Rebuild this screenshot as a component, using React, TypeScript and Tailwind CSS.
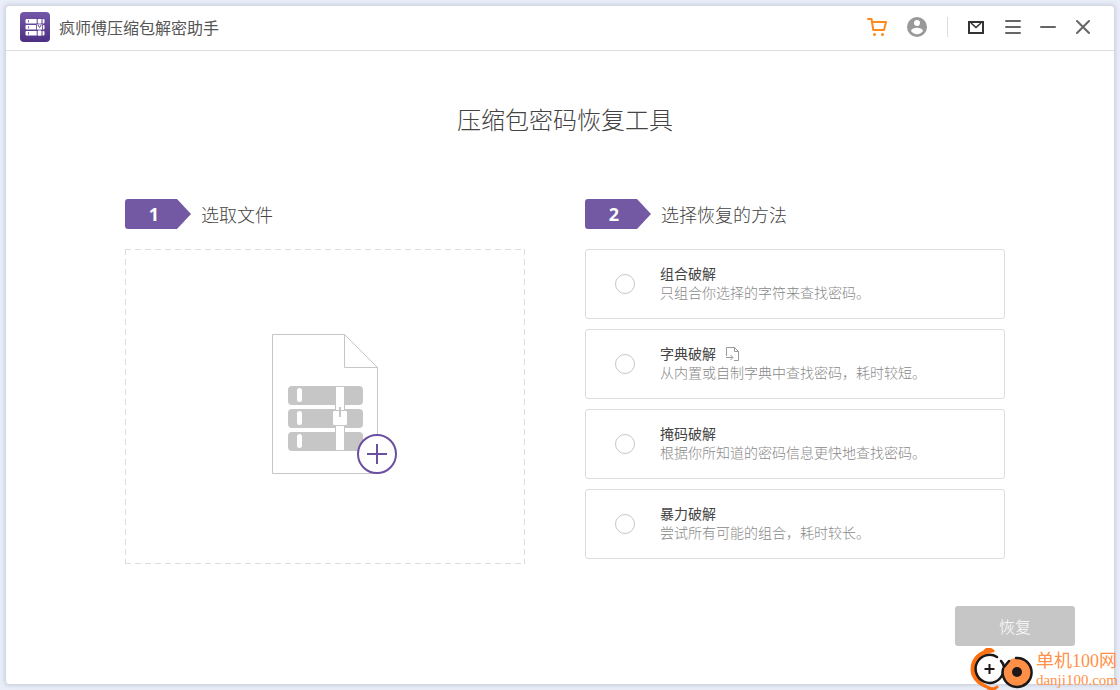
import { useState } from "react";

const methods = [
    { id: "combination", title: "组合破解", desc: "只组合你选择的字符来查找密码。" },
    { id: "dictionary", title: "字典破解", desc: "从内置或自制字典中查找密码，耗时较短。", importable: true },
    { id: "mask", title: "掩码破解", desc: "根据你所知道的密码信息更快地查找密码。" },
    { id: "brute", title: "暴力破解", desc: "尝试所有可能的组合，耗时较长。" },
];

// App logo: three binders held by a strap
const AppLogo = () => (
    <svg className="size-[30px]" viewBox="0 0 30 30" aria-hidden="true">
        <defs>
            <linearGradient id="logo-bg" x1="0" y1="0" x2="0" y2="1">
                <stop offset="0" stopColor="#7458a8" />
                <stop offset="1" stopColor="#4c2f82" />
            </linearGradient>
        </defs>
        <rect width="30" height="30" rx="4" fill="url(#logo-bg)" />
        {[7, 13, 19].map((y) => (
            <g key={y}>
                <rect x="5.500" y={y} width="19" height="4.500" rx="1" fill="#fff" />
                <rect x="8" y={y + 1} width="1" height="2.500" fill="#8a72b8" />
            </g>
        ))}
        <path d="M17.200 6v18M22 6v18" stroke="#5d4094" strokeWidth="1" />
        <path d="M19.600 7v16.500" stroke="#fff" strokeWidth="2.800" />
        <rect x="16.500" y="12" width="6" height="6" rx="1" fill="#fff" stroke="#5d4094" strokeWidth="0.800" />
        <path d="M18 13l1.600 2.500L21.200 13" stroke="#5d4094" fill="none" />
    </svg>
);

const CartIcon = () => (
    <svg className="size-5" viewBox="0 0 20 20" fill="none" stroke="#ff8a1a" strokeWidth="2" strokeLinecap="round" strokeLinejoin="round" aria-hidden="true">
        <path d="M1 2h3.500L6.300 13H17L19 5H5" />
        <circle cx="7.500" cy="17.500" r="1.500" fill="#ff8a1a" stroke="none" />
        <circle cx="15.500" cy="17.500" r="1.500" fill="#ff8a1a" stroke="none" />
    </svg>
);

const UserIcon = () => (
    <svg className="size-5" viewBox="0 0 20 20" aria-hidden="true">
        <circle cx="10" cy="10" r="10" fill="#999" />
        <circle cx="10" cy="6" r="3" fill="#fff" />
        <path d="M4 14c0-2 4-3.200 6-3.200s6 1.200 6 3.200c-1.300 2-3.500 3.200-6 3.200S5.300 16 4 14z" fill="#fff" />
    </svg>
);

const FileDrawing = () => (
    <svg className="h-[140px] w-[106px] overflow-visible" viewBox="0 0 106 140" fill="none" aria-hidden="true">
        <path d="M.5 .5H72.500L105.500 33.500V139.500H.5z M72.500 .5V33.500H105.500" stroke="#c6c6c6" />
        {[52, 75, 98].map((y) => (
            <g key={y}>
                <rect x="16" y={y} width="75" height="19" rx="4" fill="#c6c6c6" />
                <rect x="25" y={y + 2} width="5" height="14" rx="2.500" fill="#fff" />
            </g>
        ))}
        <rect x="63.500" y="52.500" width="9" height="64" fill="#fff" stroke="#c6c6c6" />
        <rect x="60.500" y="76.500" width="15" height="15" rx="1.500" fill="#fff" stroke="#c6c6c6" />
        <path d="M68 73v10" stroke="#c6c6c6" strokeWidth="2" />
        <circle cx="105" cy="120" r="19" fill="#fff" stroke="#6b4fa0" strokeWidth="2" />
        <path d="M95 120h20M105 110v20" stroke="#6b4fa0" strokeWidth="2" />
    </svg>
);

const ImportIcon = () => (
    <svg className="h-[14px] w-[13px]" viewBox="0 0 13 14" fill="none" stroke="#999" aria-hidden="true">
        <path d="M.5 9V.5H8.500L12.500 4.500V13.500H8M8.500 .5V4.500H12.500M0 10.500H6.500M4.500 8l2.500 2.500L4.500 13" />
    </svg>
);

const StepHeading = ({ step, children }: { step: number; children: string }) => (
    <div className="mb-5 flex items-center gap-[10px]">
        <span className="flex h-[30px] w-[66px] items-center justify-center rounded-l-[3px] bg-[#7359a3] pr-2 font-['Open_Sans',sans-serif] text-lg font-bold text-white [clip-path:polygon(0_0,52px_0,100%_50%,52px_100%,0_100%)]">
            {step}
        </span>
        <h2 className="text-lg leading-[30px] font-light text-[#444]">{children}</h2>
    </div>
);

const TitleBar = () => (
    <header className="flex h-[45px] items-center border-b border-[#ddd] pr-[22px] pb-[2px] pl-[14px]">
        <AppLogo />
        <span className="ml-[9px] text-base text-[#555]">疯师傅压缩包解密助手</span>
        <div className="ml-auto flex items-center gap-5">
            <button type="button" aria-label="购物车"><CartIcon /></button>
            <button type="button" aria-label="账户"><UserIcon /></button>
            <span className="h-5 w-px bg-[#ddd]" />
            <button type="button" aria-label="邮件">
                <svg className="size-4" viewBox="0 0 16 16" fill="none" stroke="#333" strokeWidth="2" aria-hidden="true">
                    <path d="M1 3h14v11H1z" />
                    <path d="M3 4l5 4.500L13 4" strokeWidth="1.600" />
                </svg>
            </button>
            <button type="button" aria-label="菜单">
                <svg className="size-4 overflow-visible" viewBox="0 0 16 16" stroke="#666" strokeWidth="2" strokeLinecap="round" aria-hidden="true">
                    <path d="M2 2h14M2 8h14M2 14h14" />
                </svg>
            </button>
            <button type="button" aria-label="最小化">
                <svg className="size-4" viewBox="0 0 16 16" stroke="#666" strokeWidth="2" strokeLinecap="round" aria-hidden="true">
                    <path d="M1 8h14" />
                </svg>
            </button>
            <button type="button" aria-label="关闭">
                <svg className="size-4" viewBox="0 0 16 16" stroke="#666" strokeWidth="2" strokeLinecap="round" aria-hidden="true">
                    <path d="M1 2l12 12M13 2L1 14" />
                </svg>
            </button>
        </div>
    </header>
);

const Watermark = () => (
    <div className="absolute right-0 bottom-0 flex items-end gap-[2px] pr-[2px] font-['Liberation_Serif','Noto_Sans_CJK_SC',serif] text-[#ff9148]">
        <svg className="h-[42px] w-[64px]" viewBox="0 0 64 42" fill="none" aria-hidden="true">
            <path d="M22 2C10 1 1 10 1 21s10 20 24 20c-11-3-20-10-20-20S12 6 22 4z" fill="#ff6f0f" stroke="#ff6f0f" strokeWidth="1" />
            <path d="M15 3c2-3 6-2 8 0M18 40c3 1 7 1 9-1" stroke="#ff6f0f" strokeWidth="3" strokeLinecap="round" />
            <circle cx="19.500" cy="21" r="14" fill="#fff" />
            <path d="M27 9A14 14 0 1 0 33 25C35 20 34 16 31 13" stroke="#1d1718" strokeWidth="2.500" strokeLinecap="round" />
            <path d="M19.500 16v10M14.500 21h10" stroke="#1d1718" strokeWidth="2" />
            <circle cx="47" cy="24" r="14" fill="#ff8f46" />
            <path d="M46 10A14.500 14.500 0 1 1 33 21M34 19l5-6" stroke="#1d1718" strokeWidth="2.500" strokeLinecap="round" />
            <circle cx="47" cy="24" r="5" fill="#1d1718" />
        </svg>
        <div className="pb-px">
            <p className="text-lg leading-5">单机100网</p>
            <p className="text-[15px] leading-[18px]">danji100.com</p>
        </div>
    </div>
);

export default function App() {
    const [method, setMethod] = useState("");

    return (
        <div className="relative flex min-h-screen bg-[#e8edf8] p-[5px] font-['Noto_Sans_CJK_SC',sans-serif]">
            <div className="flex-1 rounded-[4px] border border-[#d3d7df] bg-white shadow-[0_0_4px_rgba(100,110,140,0.3)]">
                <TitleBar />
                <main>
                    <div className="pt-[52px] pr-[109px] pl-[119px]">
                        <h1 className="mb-16 text-center text-2xl leading-8 font-light text-[#444]">压缩包密码恢复工具</h1>
                        <div className="grid grid-cols-[400fr_420fr] gap-[60px]">
                            <section>
                                <StepHeading step={1}>选取文件</StepHeading>
                                {/* Drop zone, dashes are 6px with a 4px gap */}
                                <button
                                    type="button"
                                    aria-label="选取文件"
                                    className="flex min-h-[315px] w-full items-center justify-center bg-[image:repeating-linear-gradient(90deg,#ddd_0_6px,transparent_6px_10px),repeating-linear-gradient(90deg,#ddd_0_6px,transparent_6px_10px),repeating-linear-gradient(180deg,#ddd_0_6px,transparent_6px_10px),repeating-linear-gradient(180deg,#ddd_0_6px,transparent_6px_10px)] bg-[size:100%_1px,100%_1px,1px_100%,1px_100%] bg-[position:top,bottom,left,right] bg-no-repeat pb-[6px]"
                                >
                                    <FileDrawing />
                                </button>
                            </section>
                            <section>
                                <StepHeading step={2}>选择恢复的方法</StepHeading>
                                <div className="flex flex-col gap-[10px]">
                                    {methods.map((item) => (
                                        <label key={item.id} htmlFor={item.id} className="flex h-[70px] items-center gap-[25px] rounded-[3px] border border-[#ddd] pl-[29px]">
                                            <input
                                                id={item.id}
                                                type="radio"
                                                name="method"
                                                checked={method === item.id}
                                                onChange={() => setMethod(item.id)}
                                                className="size-5 appearance-none rounded-full border border-[#c6c6c6] checked:border-[6px] checked:border-[#7359a3]"
                                            />
                                            <span className="pb-[2px] text-sm leading-[19px]">
                                                <span className="flex items-center gap-[10px] text-[#444]">
                                                    {item.title}
                                                    {item.importable && <ImportIcon />}
                                                </span>
                                                <span className="block font-light text-[#888]">{item.desc}</span>
                                            </span>
                                        </label>
                                    ))}
                                </div>
                            </section>
                        </div>
                    </div>
                    <div className="mt-[42px] flex justify-end pr-[39px]">
                        <button type="button" className="h-10 w-[120px] rounded-[3px] bg-[#c6c6c6] text-base font-light text-white">恢复</button>
                    </div>
                </main>
            </div>
            <Watermark />
        </div>
    );
}
